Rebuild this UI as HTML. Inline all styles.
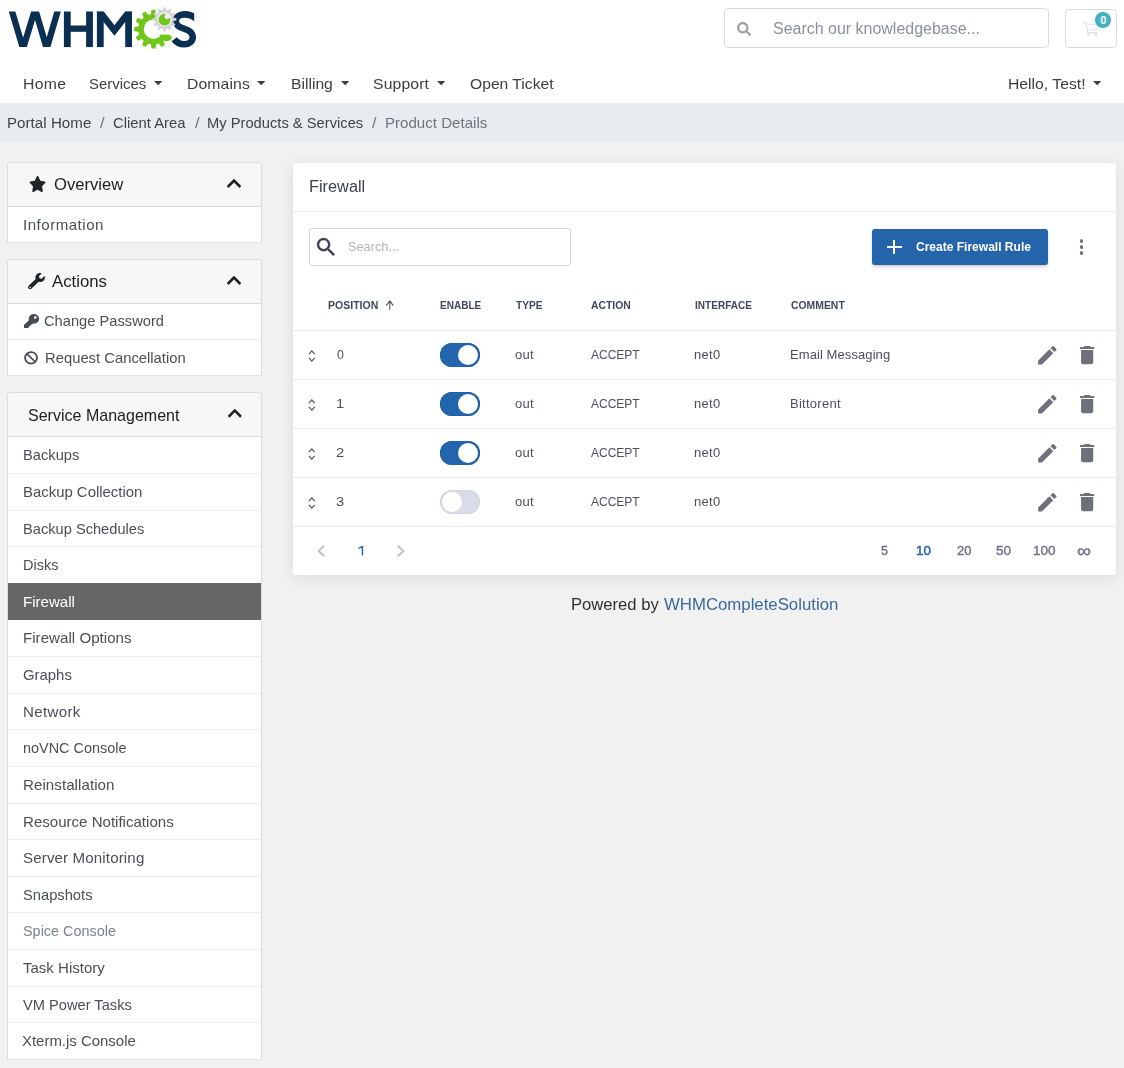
<!DOCTYPE html>
<html><head><meta charset="utf-8"><title>Client Area - Firewall</title>
<style>
*{box-sizing:border-box;margin:0;padding:0}
html,body{width:1124px;height:1068px;overflow:hidden;background:#f1f1f1;font-family:"Liberation Sans",sans-serif}
.a{position:absolute}
.t{position:absolute;white-space:nowrap;font-family:"Liberation Sans",sans-serif}
#hdr{left:0;top:0;width:1124px;height:103px;background:#fff}
#bc{left:0;top:103px;width:1124px;height:38.6px;background:#e9ecef}
.card{background:#fff;border:1px solid #dbdbdb;border-bottom-color:#e3e3e3;border-radius:4px 4px 1px 1px;overflow:hidden}
.ch{left:0;top:0;width:100%;height:44px;background:#f7f7f7;border-bottom:1px solid #d9d9d9}
.sep{left:0;width:100%;height:1px;background:#eeeeee}
.box{border:1px solid #dcdcdc;border-radius:4px;background:#fff}
#main{left:293px;top:163px;width:823px;height:411.6px;background:#fff;border-radius:3px;box-shadow:0 3px 16px rgba(0,0,0,.085)}
.hl{left:0;width:823px;height:1px;background:#e9ebf1}
.tg{width:40px;height:24px;border-radius:12px;background:#2365ac;box-shadow:inset 0 0 0 1px #1f60a8}
.tg i{position:absolute;left:17.7px;top:1.7px;width:20.6px;height:20.6px;border-radius:50%;background:#fff}
.tg.off{background:#d9dce7;box-shadow:inset 0 0 0 1px #d2d5e2}
.tg.off i{left:1.7px}
svg{position:absolute;overflow:visible}
</style></head><body>
<div class="a" id="hdr"></div>
<div class="a" id="bc"></div>

<!-- header search + cart -->
<div class="a box" style="left:724px;top:8px;width:325px;height:39.5px"></div>
<div class="a box" style="left:1065px;top:9px;width:52px;height:38.5px"></div>
<svg style="left:737.00px;top:21.90px" width="14.20" height="14.00" viewBox="0 0 512 512" preserveAspectRatio="none"><path fill="#a2a2a2" d="M505 442.7L405.3 343c-4.5-4.5-10.600-7-17-7H372c27.600-35.300 44-79.700 44-128C416 93.100 322.900 0 208 0S0 93.100 0 208s93.100 208 208 208c48.300 0 92.700-16.400 128-44v16.300c0 6.400 2.500 12.500 7 17l99.700 99.700c9.400 9.400 24.600 9.400 33.900 0l28.300-28.300c9.400-9.400 9.400-24.600.1-34zM208 336c-70.700 0-128-57.200-128-128 0-70.700 57.200-128 128-128 70.700 0 128 57.200 128 128 0 70.700-57.200 128-128 128z" /></svg>
<svg style="left:0;top:0" width="1124" height="60" viewBox="0 0 1124 60"><g fill="none" stroke="#e2e2e2" stroke-width="1.1"><path d="M1083.2 22.4 H1085.7 L1087.9 32.6 H1097.4"/><path d="M1086.2 24.3 H1098 L1096.9 29.8 H1087.4"/><circle cx="1088.7" cy="34.3" r="1.25"/><circle cx="1095.8" cy="34.3" r="1.25"/></g></svg>
<div class="a" style="left:1095.2px;top:12px;width:16px;height:16px;border-radius:50%;background:#41b1c3;color:#fff;font:700 11px/16.5px 'Liberation Sans',sans-serif;text-align:center">0</div>
<svg style="left:154.20px;top:81.40px" width="8.4" height="4.3" viewBox="0 0 10 5"><path d="M0 0H10L5 5z" fill="#3d3d3d"/></svg>
<svg style="left:257.40px;top:81.40px" width="8.4" height="4.3" viewBox="0 0 10 5"><path d="M0 0H10L5 5z" fill="#3d3d3d"/></svg>
<svg style="left:340.70px;top:81.40px" width="8.4" height="4.3" viewBox="0 0 10 5"><path d="M0 0H10L5 5z" fill="#3d3d3d"/></svg>
<svg style="left:437.40px;top:81.40px" width="8.4" height="4.3" viewBox="0 0 10 5"><path d="M0 0H10L5 5z" fill="#3d3d3d"/></svg>
<svg style="left:1093.20px;top:81.40px" width="8.4" height="4.3" viewBox="0 0 10 5"><path d="M0 0H10L5 5z" fill="#3d3d3d"/></svg>

<!-- sidebar -->
<div class="a card" style="left:7px;top:162px;width:255px;height:81px"><div class="a ch"></div></div>
<div class="a card" style="left:7px;top:259px;width:255px;height:117px"><div class="a ch"></div>
  <div class="a sep" style="top:79px"></div></div>
<div class="a card" style="left:7px;top:392px;width:255px;height:668px"><div class="a ch"></div>
<div class="a sep" style="top:80px"></div><div class="a sep" style="top:117px"></div><div class="a sep" style="top:153px"></div><div class="a sep" style="top:263px"></div><div class="a sep" style="top:300px"></div><div class="a sep" style="top:336px"></div><div class="a sep" style="top:373px"></div><div class="a sep" style="top:410px"></div><div class="a sep" style="top:446px"></div><div class="a sep" style="top:483px"></div><div class="a sep" style="top:519px"></div><div class="a sep" style="top:556px"></div><div class="a sep" style="top:593px"></div><div class="a sep" style="top:629px"></div>
<div class="a" style="left:0;top:190px;width:100%;height:36.6px;background:#666"></div>
</div>
<svg style="left:28.50px;top:175.90px" width="17.10" height="16.10" viewBox="0 0 576 512" preserveAspectRatio="none"><path fill="#212529" d="M259.3 17.800L194 150.200 47.900 171.500c-26.200 3.800-36.700 36.100-17.700 54.600l105.700 103-25 145.500c-4.500 26.300 23.200 46 46.400 33.700L288 439.600l130.700 68.700c23.200 12.200 50.900-7.400 46.400-33.700l-25-145.500 105.700-103c19-18.500 8.500-50.800-17.700-54.600L382 150.200 316.700 17.800c-11.700-23.600-45.600-23.900-57.400 0z" /></svg>
<svg style="left:27.50px;top:272.90px" width="16.90" height="16.20" viewBox="0 0 512 512" preserveAspectRatio="none"><path fill="#212529" d="M507.730 109.100c-2.240-9.030-13.540-12.090-20.120-5.510l-74.360 74.360-67.880-11.310-11.310-67.880 74.360-74.360c6.620-6.620 3.430-17.900-5.660-20.160-47.380-11.740-99.550.910-136.580 37.930-39.640 39.640-50.550 97.100-34.050 147.200L18.740 402.760c-24.990 24.990-24.990 65.510 0 90.500 24.990 24.990 65.510 24.990 90.500 0l213.210-213.210c50.120 16.710 107.470 5.680 147.370-34.220 37.070-37.070 49.700-89.320 37.910-136.730zM64 472c-13.250 0-24-10.750-24-24 0-13.260 10.750-24 24-24s24 10.740 24 24c0 13.250-10.750 24-24 24z" /></svg>
<svg style="left:23.90px;top:313.90px" width="15.10" height="14.10" viewBox="0 0 512 512" preserveAspectRatio="none"><path fill="#444b52" d="M512 176.001C512 273.203 433.202 352 336 352c-11.220 0-22.190-1.062-32.827-3.069l-24.012 27.014A23.999 23.999 0 0 1 261.223 384H224v40c0 13.255-10.745 24-24 24h-40v40c0 13.255-10.745 24-24 24H24c-13.255 0-24-10.745-24-24v-78.059c0-6.365 2.529-12.470 7.029-16.971l161.802-161.802C163.108 213.814 160 195.271 160 176 160 78.798 238.797.001 335.999 0 433.488-.001 512 78.511 512 176.001zM336 128c0 26.510 21.490 48 48 48s48-21.490 48-48-21.490-48-48-48-48 21.490-48 48z" /></svg>
<svg style="left:24.30px;top:350.90px" width="14.10" height="13.70" viewBox="0 0 512 512" preserveAspectRatio="none"><path fill="#444b52" d="M256 8C119.034 8 8 119.033 8 256s111.034 248 248 248 248-111.034 248-248S392.967 8 256 8zm130.108 117.892c65.448 65.448 70 165.481 20.677 235.637L150.470 105.216c70.204-49.356 170.226-44.735 235.638 20.676zM125.892 386.108c-65.448-65.448-70-165.481-20.677-235.637L361.530 406.784c-70.203 49.356-170.226 44.736-235.638-20.676z" /></svg>
<svg style="left:227.20px;top:178.70px" width="14.00" height="8.70" viewBox="5.6 123.4 436.8 265.4" preserveAspectRatio="none"><path fill="#222" d="M240.971 130.524l194.343 194.343c9.373 9.373 9.373 24.569 0 33.941l-22.667 22.667c-9.357 9.357-24.522 9.375-33.901.040L224 227.495 69.255 381.516c-9.379 9.335-24.544 9.317-33.901-.040l-22.667-22.667c-9.373-9.373-9.373-24.569 0-33.941L207.030 130.525c9.372-9.373 24.568-9.373 33.941-.001z"/></svg>
<svg style="left:227.20px;top:275.70px" width="14.00" height="8.70" viewBox="5.6 123.4 436.8 265.4" preserveAspectRatio="none"><path fill="#222" d="M240.971 130.524l194.343 194.343c9.373 9.373 9.373 24.569 0 33.941l-22.667 22.667c-9.357 9.357-24.522 9.375-33.901.040L224 227.495 69.255 381.516c-9.379 9.335-24.544 9.317-33.901-.040l-22.667-22.667c-9.373-9.373-9.373-24.569 0-33.941L207.030 130.525c9.372-9.373 24.568-9.373 33.941-.001z"/></svg>
<svg style="left:227.80px;top:409.20px" width="13.60" height="8.40" viewBox="5.6 123.4 436.8 265.4" preserveAspectRatio="none"><path fill="#222" d="M240.971 130.524l194.343 194.343c9.373 9.373 9.373 24.569 0 33.941l-22.667 22.667c-9.357 9.357-24.522 9.375-33.901.040L224 227.495 69.255 381.516c-9.379 9.335-24.544 9.317-33.901-.040l-22.667-22.667c-9.373-9.373-9.373-24.569 0-33.941L207.030 130.525c9.372-9.373 24.568-9.373 33.941-.001z"/></svg>

<!-- main -->
<div class="a" id="main">
  <div class="a hl" style="top:48px"></div>
  <div class="a" style="left:16px;top:65px;width:262px;height:38px;border:1px solid #d3d6e4;border-radius:3px"></div>
  <div class="a" style="left:579px;top:66px;width:176px;height:36px;background:#2364aa;border-radius:3px;box-shadow:0 2px 3px rgba(0,0,0,.18)"></div>
  <div class="a hl" style="top:167px"></div>
  <div class="a hl" style="top:216px"></div>
  <div class="a hl" style="top:265px"></div>
  <div class="a hl" style="top:314px"></div>
  <div class="a hl" style="top:363px"></div>
  <div class="a tg" style="left:147px;top:180px"><i></i></div>
  <div class="a tg" style="left:147px;top:229px"><i></i></div>
  <div class="a tg" style="left:147px;top:278px"><i></i></div>
  <div class="a tg off" style="left:147px;top:327px"><i></i></div>
</div>
<svg style="left:314.37px;top:234.87px" width="24.27" height="24.27" viewBox="0 0 24 24"><path fill="#393d4c" stroke="#393d4c" stroke-width="0.35" d="M9.5,3A6.5,6.5 0 0,1 16,9.5C16,11.11 15.41,12.59 14.44,13.73L14.71,14H15.5L20.5,19L19,20.5L14,15.5V14.71L13.73,14.44C12.59,15.41 11.11,16 9.5,16A6.5,6.5 0 0,1 3,9.5A6.5,6.5 0 0,1 9.5,3M9.5,5C7,5 5,7 5,9.5C5,12 7,14 9.5,14C12,14 14,12 14,9.5C14,7 12,5 9.5,5Z"/></svg>
<div class="a" style="left:886.8px;top:246px;width:14.9px;height:2.1px;background:#fff"></div>
<div class="a" style="left:893.2px;top:239.8px;width:2.1px;height:14.5px;background:#fff"></div>
<div class="a" style="left:1079.50px;top:239.10px;width:3.8px;height:3.8px;border-radius:50%;background:#6b6f82"></div>
<div class="a" style="left:1079.50px;top:245.10px;width:3.8px;height:3.8px;border-radius:50%;background:#6b6f82"></div>
<div class="a" style="left:1079.50px;top:251.10px;width:3.8px;height:3.8px;border-radius:50%;background:#6b6f82"></div>
<svg style="left:386.1px;top:299.8px" width="7.6" height="10" viewBox="4.08 4.16 15.84 15.84" preserveAspectRatio="none"><path fill="#464a5c" d="M13,20H11V8L5.5,13.5L4.08,12.08L12,4.16L19.92,12.08L18.5,13.5L13,8V20Z"/></svg>
<svg style="left:306px;top:347px" width="12" height="16" viewBox="306 347 12 16"><path d="M308.9 354.1 L311.8 350.9 L314.7 354.1 M308.9 357.9 L311.8 361.1 L314.7 357.9" fill="none" stroke="#55586a" stroke-width="1.3"/></svg>
<svg style="left:1034.70px;top:342.70px" width="24.6" height="24.6" viewBox="0 0 24 24"><path fill="#6e717c" d="M3 17.25V21h3.75L17.81 9.94l-3.75-3.75L3 17.25zM20.71 7.04c.39-.39.39-1.02 0-1.41l-2.34-2.34c-.39-.39-1.02-.39-1.41 0l-1.83 1.83 3.75 3.75 1.83-1.830z"/></svg>
<svg style="left:1075.00px;top:342.90px" width="24.3" height="24.3" viewBox="0 0 24 24"><path fill="#6e717c" d="M6 19c0 1.100.900 2 2 2h8c1.100 0 2-.900 2-2V7H6v12zM19 4h-3.500l-1-1h-5l-1 1H5v2h14V4z"/></svg>
<svg style="left:306px;top:396px" width="12" height="16" viewBox="306 347 12 16"><path d="M308.9 354.1 L311.8 350.9 L314.7 354.1 M308.9 357.9 L311.8 361.1 L314.7 357.9" fill="none" stroke="#55586a" stroke-width="1.3"/></svg>
<svg style="left:1034.70px;top:391.70px" width="24.6" height="24.6" viewBox="0 0 24 24"><path fill="#6e717c" d="M3 17.25V21h3.75L17.81 9.94l-3.75-3.75L3 17.25zM20.71 7.04c.39-.39.39-1.02 0-1.41l-2.34-2.34c-.39-.39-1.02-.39-1.41 0l-1.83 1.83 3.75 3.75 1.83-1.830z"/></svg>
<svg style="left:1075.00px;top:391.90px" width="24.3" height="24.3" viewBox="0 0 24 24"><path fill="#6e717c" d="M6 19c0 1.100.900 2 2 2h8c1.100 0 2-.900 2-2V7H6v12zM19 4h-3.500l-1-1h-5l-1 1H5v2h14V4z"/></svg>
<svg style="left:306px;top:445px" width="12" height="16" viewBox="306 347 12 16"><path d="M308.9 354.1 L311.8 350.9 L314.7 354.1 M308.9 357.9 L311.8 361.1 L314.7 357.9" fill="none" stroke="#55586a" stroke-width="1.3"/></svg>
<svg style="left:1034.70px;top:440.70px" width="24.6" height="24.6" viewBox="0 0 24 24"><path fill="#6e717c" d="M3 17.25V21h3.75L17.81 9.94l-3.75-3.75L3 17.25zM20.71 7.04c.39-.39.39-1.02 0-1.41l-2.34-2.34c-.39-.39-1.02-.39-1.41 0l-1.83 1.83 3.75 3.75 1.83-1.830z"/></svg>
<svg style="left:1075.00px;top:440.90px" width="24.3" height="24.3" viewBox="0 0 24 24"><path fill="#6e717c" d="M6 19c0 1.100.900 2 2 2h8c1.100 0 2-.900 2-2V7H6v12zM19 4h-3.500l-1-1h-5l-1 1H5v2h14V4z"/></svg>
<svg style="left:306px;top:494px" width="12" height="16" viewBox="306 347 12 16"><path d="M308.9 354.1 L311.8 350.9 L314.7 354.1 M308.9 357.9 L311.8 361.1 L314.7 357.9" fill="none" stroke="#55586a" stroke-width="1.3"/></svg>
<svg style="left:1034.70px;top:489.70px" width="24.6" height="24.6" viewBox="0 0 24 24"><path fill="#6e717c" d="M3 17.25V21h3.75L17.81 9.94l-3.75-3.75L3 17.25zM20.71 7.04c.39-.39.39-1.02 0-1.41l-2.34-2.34c-.39-.39-1.02-.39-1.41 0l-1.83 1.83 3.75 3.75 1.83-1.830z"/></svg>
<svg style="left:1075.00px;top:489.90px" width="24.3" height="24.3" viewBox="0 0 24 24"><path fill="#6e717c" d="M6 19c0 1.100.900 2 2 2h8c1.100 0 2-.900 2-2V7H6v12zM19 4h-3.500l-1-1h-5l-1 1H5v2h14V4z"/></svg>
<svg style="left:317.4px;top:544.7px" width="8" height="12" viewBox="8 6 7.41 12" preserveAspectRatio="none"><path fill="#c2c4ca" d="M15.41,16.58L10.83,12L15.41,7.41L14,6L8,12L14,18L15.41,16.58Z"/></svg>
<svg style="left:397.1px;top:544.7px" width="8" height="12" viewBox="8.59 6 7.41 12" preserveAspectRatio="none"><path fill="#c2c4ca" d="M8.59,16.58L13.17,12L8.59,7.41L10,6L16,12L10,18L8.59,16.58Z"/></svg>
<svg style="left:0;top:0" width="1124" height="600" viewBox="0 0 1124 600"><path fill="#2263a9" d="M361.75 546.1H363.15V555.45H361.75V547.75L358.2 549.1V547.8Z"/></svg>
<svg style="left:0;top:0;filter:blur(.3px)" width="210" height="60" viewBox="0 0 210 60">
<defs><clipPath id="lc"><rect x="0" y="11.5" width="210" height="35.6"/></clipPath><clipPath id="mc"><rect x="96.9" y="11.5" width="35.1" height="35.6"/></clipPath><clipPath id="sc"><path d="M168 5H194.2V24H198V52H168Z"/></clipPath></defs>
<g clip-path="url(#lc)" fill="none" stroke="#0b2f50" stroke-width="6.3" stroke-linejoin="miter" stroke-miterlimit="10">
<path d="M11.0 8 L23.05 48.5 L35.15 9.1 L46.7 48.5 L58.6 8"/>
<path d="M96.5 7.5 L114.45 30.5 L132.4 7.5" stroke-width="6.5" clip-path="url(#mc)"/>
</g>
<rect x="63.9" y="11.5" width="6.8" height="35.6" fill="#0b2f50"/><rect x="86.1" y="11.5" width="6.8" height="35.6" fill="#0b2f50"/><rect x="66" y="25.5" width="24" height="6.3" fill="#0b2f50"/>
<rect x="96.9" y="11.5" width="6.8" height="35.6" fill="#0b2f50"/><rect x="125.2" y="11.5" width="6.8" height="35.6" fill="#0b2f50"/>
<path d="M197.5 19.6 C193.6 16 189.3 14.4 184.4 14.4 C179.0 14.4 175.7 17.2 175.700 21.2 C175.8 25.6 179.2 27.3 184.6 28.9 C190.2 30.6 192.8 32.7 192.8 37.1 C192.8 41.3 189.4 44.3 184.3 44.3 C179.9 44.300 176.5 42.5 174.2 39.3" fill="none" stroke="#0b2f50" stroke-width="6.6" clip-path="url(#sc)"/>
<defs><mask id="gm"><rect x="120" y="0" width="80" height="60" fill="#fff"/>
<circle cx="153.5" cy="29.2" r="9.7" fill="#000"/>
<path d="M152.50 29.20 L159.22 -0.25 L200.00 -5.00 L200.00 34.75 L152.50 34.75Z" fill="#000"/>
</mask></defs>
<path d="M168.57 26.57 L172.89 27.16 L172.89 31.24 L168.57 31.83 L167.87 34.46 L171.31 37.13 L169.28 40.66 L165.24 39.01 L163.31 40.94 L164.96 44.98 L161.43 47.01 L158.76 43.57 L156.13 44.27 L155.54 48.59 L151.46 48.59 L150.87 44.27 L148.24 43.57 L145.57 47.01 L142.04 44.98 L143.69 40.94 L141.76 39.01 L137.72 40.66 L135.69 37.13 L139.13 34.46 L138.43 31.83 L134.11 31.24 L134.11 27.16 L138.43 26.57 L139.13 23.94 L135.69 21.27 L137.72 17.74 L141.76 19.39 L143.69 17.46 L142.04 13.42 L145.57 11.39 L148.24 14.83 L150.87 14.13 L151.46 9.81 L155.54 9.81 L156.13 14.13 L158.76 14.83 L161.43 11.39 L164.96 13.42 L163.31 17.46 L165.24 19.39 L169.28 17.74 L171.31 21.27 L167.87 23.94Z" fill="#70c618" mask="url(#mg)" style="mask:url(#gm)"/>
<path d="M160 34.75 L169.3 34.75 C171.2 35.6 172.2 37.4 171.6 39.2 L166 41.5 L160 39z" fill="#70c618"/>
<path d="M173.78 17.93 L176.33 18.09 L176.33 20.71 L173.78 20.87 L173.28 22.77 L175.40 24.18 L174.09 26.44 L171.81 25.32 L170.42 26.71 L171.54 28.99 L169.28 30.30 L167.87 28.18 L165.97 28.68 L165.81 31.23 L163.19 31.23 L163.03 28.68 L161.13 28.18 L159.72 30.30 L157.46 28.99 L158.58 26.71 L157.19 25.32 L154.91 26.44 L153.60 24.18 L155.72 22.77 L155.22 20.87 L152.67 20.71 L152.67 18.09 L155.22 17.93 L155.72 16.03 L153.60 14.62 L154.91 12.36 L157.19 13.48 L158.58 12.09 L157.46 9.81 L159.72 8.50 L161.13 10.62 L163.03 10.12 L163.19 7.57 L165.81 7.57 L165.97 10.12 L167.87 10.62 L169.28 8.50 L171.54 9.81 L170.42 12.09 L171.81 13.48 L174.09 12.36 L175.40 14.62 L173.28 16.03Z" fill="#d4d4d4"/>
<circle cx="164.5" cy="19.4" r="7.2" fill="#efeaf5"/>
<defs><mask id="im"><rect x="150" y="5" width="30" height="30" fill="#fff"/><circle cx="167.0" cy="16.4" r="2.5" fill="#000"/><path d="M165.2 14.6 L167.5 9 L175 9 L175 17.2 L168.8 18.2z" fill="#000"/></mask></defs>
<circle cx="164.5" cy="19.7" r="5.9" fill="#70c618" style="mask:url(#im)"/>
</svg>
<span class="t" style="left:23.02px;top:76px;font-size:15px;line-height:15px;color:#3d3d3d;font-weight:400;letter-spacing:0.282px;transform:scaleX(1.0500);transform-origin:0 0;">Home</span>
<span class="t" style="left:89.47px;top:76px;font-size:15px;line-height:15px;color:#3d3d3d;font-weight:400;letter-spacing:0.000px;transform:scaleX(0.9959);transform-origin:0 0;">Services</span>
<span class="t" style="left:186.92px;top:76px;font-size:15px;line-height:15px;color:#3d3d3d;font-weight:400;letter-spacing:0.108px;transform:scaleX(1.0500);transform-origin:0 0;">Domains</span>
<span class="t" style="left:290.66px;top:76px;font-size:15px;line-height:15px;color:#3d3d3d;font-weight:400;letter-spacing:0.000px;transform:scaleX(1.0448);transform-origin:0 0;">Billing</span>
<span class="t" style="left:372.91px;top:76px;font-size:15px;line-height:15px;color:#3d3d3d;font-weight:400;letter-spacing:0.117px;transform:scaleX(1.0500);transform-origin:0 0;">Support</span>
<span class="t" style="left:469.94px;top:76px;font-size:15px;line-height:15px;color:#3d3d3d;font-weight:400;letter-spacing:0.000px;transform:scaleX(1.0436);transform-origin:0 0;">Open Ticket</span>
<span class="t" style="left:1007.94px;top:76px;font-size:15px;line-height:15px;color:#3d3d3d;font-weight:400;letter-spacing:0.000px;transform:scaleX(1.0489);transform-origin:0 0;">Hello, Test!</span>
<span class="t" style="left:6.66px;top:116px;font-size:14.4px;line-height:14.4px;color:#3f4347;font-weight:400;letter-spacing:0.034px;transform:scaleX(1.0500);transform-origin:0 0;">Portal Home</span>
<span class="t" style="left:100.00px;top:116px;font-size:14.4px;line-height:14.4px;color:#6c757d;font-weight:400;letter-spacing:0.000px;transform:scaleX(1.1500);transform-origin:0 0;">/</span>
<span class="t" style="left:113.05px;top:116px;font-size:14.4px;line-height:14.4px;color:#3f4347;font-weight:400;letter-spacing:0.000px;transform:scaleX(1.0293);transform-origin:0 0;">Client Area</span>
<span class="t" style="left:194.64px;top:116px;font-size:14.4px;line-height:14.4px;color:#6c757d;font-weight:400;letter-spacing:0.000px;transform:scaleX(1.1600);transform-origin:0 0;">/</span>
<span class="t" style="left:207.18px;top:116px;font-size:14.4px;line-height:14.4px;color:#3f4347;font-weight:400;letter-spacing:0.000px;transform:scaleX(1.0227);transform-origin:0 0;">My Products &amp; Services</span>
<span class="t" style="left:371.50px;top:116px;font-size:14.4px;line-height:14.4px;color:#6c757d;font-weight:400;letter-spacing:0.000px;transform:scaleX(1.1250);transform-origin:0 0;">/</span>
<span class="t" style="left:384.84px;top:116px;font-size:14.4px;line-height:14.4px;color:#6c757d;font-weight:400;letter-spacing:0.000px;transform:scaleX(1.0481);transform-origin:0 0;">Product Details</span>
<span class="t" style="left:773.06px;top:21px;font-size:16px;line-height:16px;color:#8b9198;font-weight:400;letter-spacing:0.000px;transform:scaleX(0.9982);transform-origin:0 0;">Search our knowledgebase...</span>
<span class="t" style="left:54.12px;top:176px;font-size:17px;line-height:17px;color:#222;font-weight:400;letter-spacing:0.000px;transform:scaleX(0.9771);transform-origin:0 0;">Overview</span>
<span class="t" style="left:52.26px;top:273px;font-size:17px;line-height:17px;color:#222;font-weight:400;letter-spacing:0.000px;transform:scaleX(0.9862);transform-origin:0 0;">Actions</span>
<span class="t" style="left:27.99px;top:407px;font-size:17px;line-height:17px;color:#222;font-weight:400;letter-spacing:0.000px;transform:scaleX(0.9427);transform-origin:0 0;">Service Management</span>
<span class="t" style="left:22.74px;top:218px;font-size:14.4px;line-height:14.4px;color:#4a4f55;font-weight:400;letter-spacing:0.462px;transform:scaleX(1.0500);transform-origin:0 0;">Information</span>
<span class="t" style="left:43.93px;top:314px;font-size:14.4px;line-height:14.4px;color:#4a4f55;font-weight:400;letter-spacing:0.000px;transform:scaleX(1.0200);transform-origin:0 0;">Change Password</span>
<span class="t" style="left:44.70px;top:351px;font-size:14.4px;line-height:14.4px;color:#4a4f55;font-weight:400;letter-spacing:0.000px;transform:scaleX(1.0286);transform-origin:0 0;">Request Cancellation</span>
<span class="t" style="left:22.66px;top:448px;font-size:14.4px;line-height:14.4px;color:#4a4f55;font-weight:400;letter-spacing:0.000px;transform:scaleX(1.0200);transform-origin:0 0;">Backups</span>
<span class="t" style="left:22.79px;top:485px;font-size:14.4px;line-height:14.4px;color:#4a4f55;font-weight:400;letter-spacing:0.000px;transform:scaleX(1.0359);transform-origin:0 0;">Backup Collection</span>
<span class="t" style="left:22.66px;top:522px;font-size:14.4px;line-height:14.4px;color:#4a4f55;font-weight:400;letter-spacing:-0.000px;transform:scaleX(1.0172);transform-origin:0 0;">Backup Schedules</span>
<span class="t" style="left:22.66px;top:558px;font-size:14.4px;line-height:14.4px;color:#4a4f55;font-weight:400;letter-spacing:0.000px;transform:scaleX(1.0072);transform-origin:0 0;">Disks</span>
<span class="t" style="left:22.66px;top:595px;font-size:14.4px;line-height:14.4px;color:#fff;font-weight:400;letter-spacing:-0.000px;transform:scaleX(1.0464);transform-origin:0 0;">Firewall</span>
<span class="t" style="left:22.98px;top:631px;font-size:14.4px;line-height:14.4px;color:#4a4f55;font-weight:400;letter-spacing:0.016px;transform:scaleX(1.0500);transform-origin:0 0;">Firewall Options</span>
<span class="t" style="left:22.95px;top:668px;font-size:14.4px;line-height:14.4px;color:#4a4f55;font-weight:400;letter-spacing:0.000px;transform:scaleX(1.0353);transform-origin:0 0;">Graphs</span>
<span class="t" style="left:22.66px;top:705px;font-size:14.4px;line-height:14.4px;color:#4a4f55;font-weight:400;letter-spacing:0.296px;transform:scaleX(1.0500);transform-origin:0 0;">Network</span>
<span class="t" style="left:22.68px;top:741px;font-size:14.4px;line-height:14.4px;color:#4a4f55;font-weight:400;letter-spacing:0.000px;transform:scaleX(1.0030);transform-origin:0 0;">noVNC Console</span>
<span class="t" style="left:22.66px;top:778px;font-size:14.4px;line-height:14.4px;color:#4a4f55;font-weight:400;letter-spacing:0.051px;transform:scaleX(1.0500);transform-origin:0 0;">Reinstallation</span>
<span class="t" style="left:22.66px;top:815px;font-size:14.4px;line-height:14.4px;color:#4a4f55;font-weight:400;letter-spacing:0.000px;transform:scaleX(1.0466);transform-origin:0 0;">Resource Notifications</span>
<span class="t" style="left:23.37px;top:851px;font-size:14.4px;line-height:14.4px;color:#4a4f55;font-weight:400;letter-spacing:0.121px;transform:scaleX(1.0500);transform-origin:0 0;">Server Monitoring</span>
<span class="t" style="left:23.40px;top:888px;font-size:14.4px;line-height:14.4px;color:#4a4f55;font-weight:400;letter-spacing:0.000px;transform:scaleX(1.0217);transform-origin:0 0;">Snapshots</span>
<span class="t" style="left:23.20px;top:924px;font-size:14.4px;line-height:14.4px;color:#7b8288;font-weight:400;letter-spacing:0.000px;transform:scaleX(1.0017);transform-origin:0 0;">Spice Console</span>
<span class="t" style="left:23.00px;top:961px;font-size:14.4px;line-height:14.4px;color:#4a4f55;font-weight:400;letter-spacing:0.000px;transform:scaleX(1.0437);transform-origin:0 0;">Task History</span>
<span class="t" style="left:23.00px;top:998px;font-size:14.4px;line-height:14.4px;color:#4a4f55;font-weight:400;letter-spacing:0.000px;transform:scaleX(1.0178);transform-origin:0 0;">VM Power Tasks</span>
<span class="t" style="left:21.57px;top:1034px;font-size:14.4px;line-height:14.4px;color:#4a4f55;font-weight:400;letter-spacing:-0.000px;transform:scaleX(1.0383);transform-origin:0 0;">Xterm.js Console</span>
<span class="t" style="left:308.68px;top:179px;font-size:16px;line-height:16px;color:#3e4254;font-weight:400;letter-spacing:0.000px;transform:scaleX(1.0198);transform-origin:0 0;">Firewall</span>
<span class="t" style="left:348.24px;top:240px;font-size:13px;line-height:13px;color:#b3b3b3;font-weight:400;letter-spacing:0.000px;transform:scaleX(0.9821);transform-origin:0 0;">Search...</span>
<span class="t" style="left:916.40px;top:241px;font-size:12.8px;line-height:12.8px;color:#fff;font-weight:700;letter-spacing:0.000px;transform:scaleX(0.9393);transform-origin:0 0;">Create Firewall Rule</span>
<span class="t" style="left:327.74px;top:300px;font-size:11px;line-height:11px;color:#43475a;font-weight:700;letter-spacing:0.000px;transform:scaleX(0.9562);transform-origin:0 0;">POSITION</span>
<span class="t" style="left:439.85px;top:300px;font-size:11px;line-height:11px;color:#43475a;font-weight:700;letter-spacing:0.000px;transform:scaleX(0.9115);transform-origin:0 0;">ENABLE</span>
<span class="t" style="left:515.50px;top:300px;font-size:11px;line-height:11px;color:#43475a;font-weight:700;letter-spacing:0.000px;transform:scaleX(0.9257);transform-origin:0 0;">TYPE</span>
<span class="t" style="left:591.24px;top:300px;font-size:11px;line-height:11px;color:#43475a;font-weight:700;letter-spacing:0.000px;transform:scaleX(0.9450);transform-origin:0 0;">ACTION</span>
<span class="t" style="left:694.77px;top:300px;font-size:11px;line-height:11px;color:#43475a;font-weight:700;letter-spacing:0.000px;transform:scaleX(0.9135);transform-origin:0 0;">INTERFACE</span>
<span class="t" style="left:791.34px;top:300px;font-size:11px;line-height:11px;color:#43475a;font-weight:700;letter-spacing:0.000px;transform:scaleX(0.9456);transform-origin:0 0;">COMMENT</span>
<span class="t" style="left:336.88px;top:349px;font-size:12.4px;line-height:12.4px;color:#4c4f60;font-weight:400;letter-spacing:0.000px;transform:scaleX(0.9995);transform-origin:0 0;">0</span>
<span class="t" style="left:514.98px;top:349px;font-size:12.4px;line-height:12.4px;color:#4c4f60;font-weight:400;letter-spacing:0.209px;transform:scaleX(1.0500);transform-origin:0 0;">out</span>
<span class="t" style="left:591.00px;top:349px;font-size:12.4px;line-height:12.4px;color:#4c4f60;font-weight:400;letter-spacing:0.000px;transform:scaleX(0.9691);transform-origin:0 0;">ACCEPT</span>
<span class="t" style="left:694.26px;top:349px;font-size:12.4px;line-height:12.4px;color:#4c4f60;font-weight:400;letter-spacing:0.287px;transform:scaleX(1.0500);transform-origin:0 0;">net0</span>
<span class="t" style="left:335.81px;top:398px;font-size:12.4px;line-height:12.4px;color:#4c4f60;font-weight:400;letter-spacing:0.000px;transform:scaleX(1.1866);transform-origin:0 0;">1</span>
<span class="t" style="left:514.98px;top:398px;font-size:12.4px;line-height:12.4px;color:#4c4f60;font-weight:400;letter-spacing:0.209px;transform:scaleX(1.0500);transform-origin:0 0;">out</span>
<span class="t" style="left:591.00px;top:398px;font-size:12.4px;line-height:12.4px;color:#4c4f60;font-weight:400;letter-spacing:0.000px;transform:scaleX(0.9691);transform-origin:0 0;">ACCEPT</span>
<span class="t" style="left:694.26px;top:398px;font-size:12.4px;line-height:12.4px;color:#4c4f60;font-weight:400;letter-spacing:0.287px;transform:scaleX(1.0500);transform-origin:0 0;">net0</span>
<span class="t" style="left:336.26px;top:447px;font-size:12.4px;line-height:12.4px;color:#4c4f60;font-weight:400;letter-spacing:0.000px;transform:scaleX(1.1875);transform-origin:0 0;">2</span>
<span class="t" style="left:514.98px;top:447px;font-size:12.4px;line-height:12.4px;color:#4c4f60;font-weight:400;letter-spacing:0.209px;transform:scaleX(1.0500);transform-origin:0 0;">out</span>
<span class="t" style="left:591.00px;top:447px;font-size:12.4px;line-height:12.4px;color:#4c4f60;font-weight:400;letter-spacing:0.000px;transform:scaleX(0.9691);transform-origin:0 0;">ACCEPT</span>
<span class="t" style="left:694.26px;top:447px;font-size:12.4px;line-height:12.4px;color:#4c4f60;font-weight:400;letter-spacing:0.287px;transform:scaleX(1.0500);transform-origin:0 0;">net0</span>
<span class="t" style="left:336.45px;top:496px;font-size:12.4px;line-height:12.4px;color:#4c4f60;font-weight:400;letter-spacing:0.000px;transform:scaleX(1.1868);transform-origin:0 0;">3</span>
<span class="t" style="left:514.98px;top:496px;font-size:12.4px;line-height:12.4px;color:#4c4f60;font-weight:400;letter-spacing:0.209px;transform:scaleX(1.0500);transform-origin:0 0;">out</span>
<span class="t" style="left:591.00px;top:496px;font-size:12.4px;line-height:12.4px;color:#4c4f60;font-weight:400;letter-spacing:0.000px;transform:scaleX(0.9691);transform-origin:0 0;">ACCEPT</span>
<span class="t" style="left:694.26px;top:496px;font-size:12.4px;line-height:12.4px;color:#4c4f60;font-weight:400;letter-spacing:0.287px;transform:scaleX(1.0500);transform-origin:0 0;">net0</span>
<span class="t" style="left:790.42px;top:349px;font-size:12.4px;line-height:12.4px;color:#4c4f60;font-weight:400;letter-spacing:0.074px;transform:scaleX(1.0500);transform-origin:0 0;">Email Messaging</span>
<span class="t" style="left:790.46px;top:398px;font-size:12.4px;line-height:12.4px;color:#4c4f60;font-weight:400;letter-spacing:0.243px;transform:scaleX(1.0500);transform-origin:0 0;">Bittorent</span>
<span class="t" style="left:880.60px;top:544px;font-size:13px;line-height:13px;color:#6b6f82;font-weight:400;letter-spacing:0.000px;transform:scaleX(0.9676);transform-origin:0 0;-webkit-text-stroke:0.35px #6b6f82;">5</span>
<span class="t" style="left:916.01px;top:544px;font-size:13px;line-height:13px;color:#2263a9;font-weight:400;letter-spacing:0.000px;transform:scaleX(1.0277);transform-origin:0 0;-webkit-text-stroke:0.45px #2263a9;">10</span>
<span class="t" style="left:956.76px;top:544px;font-size:13px;line-height:13px;color:#6b6f82;font-weight:400;letter-spacing:0.000px;transform:scaleX(0.9948);transform-origin:0 0;-webkit-text-stroke:0.35px #6b6f82;">20</span>
<span class="t" style="left:996.04px;top:544px;font-size:13px;line-height:13px;color:#6b6f82;font-weight:400;letter-spacing:0.025px;transform:scaleX(1.0500);transform-origin:0 0;-webkit-text-stroke:0.35px #6b6f82;">50</span>
<span class="t" style="left:1033.00px;top:544px;font-size:13px;line-height:13px;color:#6b6f82;font-weight:400;letter-spacing:0.000px;transform:scaleX(1.0438);transform-origin:0 0;-webkit-text-stroke:0.35px #6b6f82;">100</span>
<span class="t" style="left:1076.64px;top:542px;font-size:18px;line-height:18px;color:#6b6f82;font-weight:400;letter-spacing:0.000px;transform:scaleX(1.0900);transform-origin:0 0;-webkit-text-stroke:0.35px #6b6f82;">∞</span>
<span class="t" style="left:571.46px;top:597px;font-size:16px;line-height:16px;color:#303030;font-weight:400;letter-spacing:0.000px;transform:scaleX(1.0382);transform-origin:0 0;">Powered by</span>
<span class="t" style="left:664.08px;top:597px;font-size:16px;line-height:16px;color:#3a6a9b;font-weight:400;letter-spacing:0.000px;transform:scaleX(1.0481);transform-origin:0 0;">WHMCompleteSolution</span>
</body></html>
